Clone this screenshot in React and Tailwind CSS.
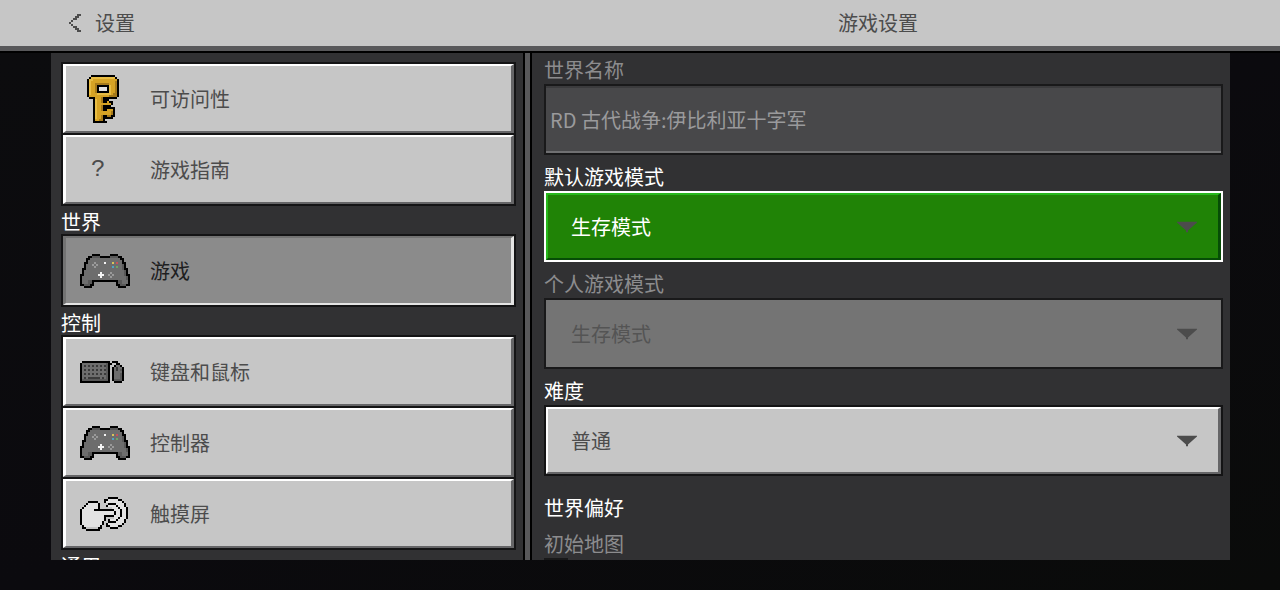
import { clsx } from 'clsx';

const PALETTE = {
  K: '#000000',
  W: '#f4f4f4',
  w: '#e2e2e2',
  s: '#c4c4c4',
  g: '#6d6d6d',
  d: '#585858',
  a: '#9a9a9a',
  k: '#3a3a3a',
  l: '#e8bd45',
  y: '#d6a325',
  o: '#a67a1b',
  r: '#c8505c',
  b: '#4fa3c4',
  e: '#6fa565',
  u: '#d8c35a',
};

const KEY = [
  '..KKKKKKKKKKKK..',
  '.KllllllllllllK.',
  'KllyyyyyyyyyyyyK',
  'KlyyyyyyyyyyyyoK',
  'KlyyoooooooyyyoK',
  'KlyyoKKKKKKlyyoK',
  'KlyyoKwwwwKlyyoK',
  'KlyyoKwwwwKlyyoK',
  'KlyyoKKKKKKlyyoK',
  'KlyyylllllllyooK',
  'KyyyyyyyyyyooooK',
  '.KKKyyyoKKKKKKK.',
  '...KlyyoKKK.....',
  '...KlyyoKKyKK...',
  '...KlyyyyyyyK...',
  '...KlyyoKKKK....',
  '...KlyyoKKKKKK..',
  '...KlyyoKKyyyK..',
  '...KlyyyyyyyoK..',
  '...KlyyyyyyyoK..',
  '...KlyyoKKooKK..',
  '...KlyyoKKKKK...',
  '...KyyooK.......',
  '...KKKKKKK......',
];

const GAMEPAD = [
  '......KKKK.....KKKK......',
  '....KKddddKKKKKddddKK....',
  '...KKgggggggggggggggKK...',
  '...KgggggggggggggggggK...',
  '..KKgggaggggWgggugrggKK..',
  '..KgggagaggggggggggggdK..',
  '..KggggaggggggggbgeggdK..',
  '.KKggggggggggggggggggdKK.',
  '.KggggggggggggggggggggdK.',
  '.KggggggggWggggaggggggdK.',
  'KKgggggggWWWggagagggggdKK',
  'KgggggggggWggggagggggggdK',
  'KggggggggggggggggggggggdK',
  'KgggddKKKKKKKKKKKKKddgggK',
  'KgggddK...........KddgggK',
  'KKdddKK...........KKdddKK',
  '..KKKK.............KKKK..',
];

const KEYBOARD = [
  '.KKKKKKKKKKKKKK.KKK....',
  'KggggggggggggdKK..KK...',
  'KgkgkgkgkgkgkdK..KggK..',
  'KggggggggggggdK.KgkggK.',
  'KgkgkgkgkgkgkdK.KgkgdK.',
  'KggggggggggggdK.KggggK.',
  'KgkgkgkgkgkgkdK.KgggdK.',
  'KggggggggggggdK.KgggdK.',
  'KgkgkkkkkkgkgdK.KgggdK.',
  'KdddddddddddddK.KddddK.',
  'KKKKKKKKKKKKKKK..KKKK..',
];

const TOUCH = [
  '..............KKKKK.....',
  '............KKwwwwwKK...',
  '....KKKKK...KwwwwwwwwK..',
  '...KwwwwwK....KKKKwwwwK.',
  '..KwwwwwwK...KwwwwKwwwK.',
  '.KwwwwwwwK......wwwKwwwK',
  'KwwwwwwKKKKKKKKKKwwwKwwK',
  'KwwwwwwwwwwwwwwwwKwwKwwK',
  'KwwwwwwwwwwwwwwwwKwwKwwK',
  'KwwwwwwwwwwwKKKKKwwwKwwK',
  'KwwwwwwwwwwwK....wwKwwwK',
  'KwwwwwwwwwwwK.KwwwKwwwK.',
  'KwwwwwwwwwwK..KKKKwwwwK.',
  'KwwwwwwwwwwK.KwwwwwwwK..',
  '.KwwwwwwwwK..KKwwwwKK...',
  '.KKssssssKK....KKKK.....',
  '...KKKKKKK..............',
];

const CHEVRON_LEFT = [
  '....KK',
  '...KK.',
  '..KK..',
  '.K....',
  'K.....',
  '.K....',
  '..KK..',
  '...KK.',
  '....KK',
];

function PixelIcon({ rows, size = 2, colors = PALETTE }) {
  const cols = rows[0].length;
  return (
    <svg
      width={cols * size}
      height={rows.length * size}
      viewBox={`0 0 ${cols} ${rows.length}`}
      shapeRendering="crispEdges"
      aria-hidden="true"
    >
      {rows.flatMap((row, y) =>
        [...row].map((c, x) =>
          c === '.' ? null : <rect key={`${x}-${y}`} x={x} y={y} width="1" height="1" fill={colors[c]} />
        )
      )}
    </svg>
  );
}

const SECTIONS = [
  {
    title: null,
    items: [
      { label: '可访问性', icon: <PixelIcon rows={KEY} />, narrow: true },
      { label: '游戏指南', icon: <span className="px-1 font-['Liberation_Mono'] text-2xl">?</span>, narrow: true },
    ],
  },
  {
    title: '世界',
    items: [{ label: '游戏', icon: <PixelIcon rows={GAMEPAD} />, active: true }],
  },
  {
    title: '控制',
    items: [
      { label: '键盘和鼠标', icon: <PixelIcon rows={KEYBOARD} /> },
      { label: '控制器', icon: <PixelIcon rows={GAMEPAD} /> },
      { label: '触摸屏', icon: <PixelIcon rows={TOUCH} /> },
    ],
  },
  { title: '通用', items: [] },
];

function NavButton({ label, icon, narrow, active }) {
  return (
    <button
      type="button"
      aria-current={active ? 'page' : undefined}
      className={clsx(
        'flex h-[69px] w-full items-center border-2 border-l-3 border-r-3 text-left',
        active
          ? 'border-t-[#737373] border-l-[#737373] border-r-[#e4e4e4] border-b-[#e4e4e4] bg-[#8b8b8b] text-[#1e1e1f]'
          : 'border-t-white border-l-white border-r-[#656567] border-b-[#656567] bg-[#c6c6c6] text-[#4c4c4c]'
      )}
    >
      <span className={clsx('ml-3.5 flex w-[50px]', narrow && 'pl-[7px]')}>{icon}</span>
      <span className="ml-5">{label}</span>
    </button>
  );
}

function Sidebar() {
  return (
    <nav className="overflow-hidden border-r-2 border-black bg-[#313133] pt-[9px] pr-[7px] pl-2.5">
      {SECTIONS.map((section, i) => (
        <section key={i}>
          {section.title && <h2 className="pt-1 leading-6 text-white">{section.title}</h2>}
          {section.items.length > 0 && (
            <ul className="flex flex-col gap-0.5 bg-[#141415] p-0.5">
              {section.items.map((item) => (
                <li key={item.label}>
                  <NavButton {...item} />
                </li>
              ))}
            </ul>
          )}
        </section>
      ))}
    </nav>
  );
}

function FieldLabel({ htmlFor, muted, children }) {
  return (
    <label htmlFor={htmlFor} className={clsx('block pt-2 leading-7', muted ? 'text-[#8c8c8e]' : 'text-white')}>
      {children}
    </label>
  );
}

const SELECT_STYLES = {
  focused: {
    frame: 'border-white',
    face: 'border-t-[#27b81c] border-l-[#27b81c] border-r-[#064d06] border-b-[#064d06] bg-[#208306] text-white',
  },
  disabled: {
    frame: 'border-[#19191a]',
    face: 'border-[#747474] bg-[#747474] text-[#545454]',
  },
  normal: {
    frame: 'border-[#141415]',
    face: 'border-t-white border-l-white border-r-[#656567] border-b-[#656567] bg-[#c6c6c6] text-[#4c4c4c]',
  },
};

function SelectField({ id, label, value, options, variant = 'normal' }) {
  const style = SELECT_STYLES[variant];
  const disabled = variant === 'disabled';
  return (
    <div>
      <FieldLabel htmlFor={id} muted={disabled}>
        {label}
      </FieldLabel>
      <div className={clsx('relative border-2', style.frame)}>
        <select
          id={id}
          defaultValue={value}
          disabled={disabled}
          className={clsx(
            'block h-[67px] w-full appearance-none rounded-none border-2 border-r-3 pl-[23px] outline-none disabled:opacity-100',
            style.face
          )}
        >
          {options.map((option) => (
            <option key={option}>{option}</option>
          ))}
        </select>
        <svg
          className="pointer-events-none absolute top-1/2 right-6 -translate-y-1/2 text-[#4c4c4c]"
          width="20"
          height="11"
          viewBox="0 0 20 11"
          aria-hidden="true"
        >
          <path d="M0 0h20v1L11 9v2H9V9L0 1z" fill="currentColor" />
        </svg>
      </div>
    </div>
  );
}

const MODES = ['生存模式', '创造模式', '冒险模式'];

function GameSettings() {
  return (
    <main className="overflow-hidden border-l-2 border-black bg-[#313133] pr-[7px] pl-3">
      <div>
        <label htmlFor="world-name" className="block pt-[3px] leading-7 text-[#8c8c8e]">
          世界名称
        </label>
        <div className="border-2 border-[#19191a]">
          <input
            id="world-name"
            type="text"
            disabled
            defaultValue="RD 古代战争:伊比利亚十字军"
            className="block h-[67px] w-full border-t-2 border-b-2 border-t-[#3b3b3d] border-b-[#707072] bg-[#48484a] px-1 text-[#9a9a9c]"
          />
        </div>
      </div>
      <SelectField id="default-mode" label="默认游戏模式" value="生存模式" options={MODES} variant="focused" />
      <SelectField id="personal-mode" label="个人游戏模式" value="生存模式" options={MODES} variant="disabled" />
      <SelectField id="difficulty" label="难度" value="普通" options={['和平', '简单', '普通', '困难']} />
      <h2 className="pt-[18px] leading-7 text-white">世界偏好</h2>
      <FieldLabel htmlFor="starting-map" muted>
        初始地图
      </FieldLabel>
      <input
        id="starting-map"
        type="checkbox"
        disabled
        className="block h-6 w-6 appearance-none border-2 border-[#19191a] bg-[#48484a]"
      />
    </main>
  );
}

export default function App() {
  return (
    <div className="flex h-screen flex-col overflow-hidden bg-[#0b0b0d] font-['Noto_Sans_CJK_SC',sans-serif] text-xl font-normal">
      <header className="grid shrink-0 grid-cols-[479fr_700fr] border-b-5 border-[#58585a] bg-[#c6c6c6] pr-[50px] pl-[51px] text-[#4c4c4c]">
        <div className="flex h-[46px] items-center">
          <button type="button" aria-label="返回" className="ml-[18px]">
            <PixelIcon rows={CHEVRON_LEFT} colors={{ K: '#4c4c4c' }} />
          </button>
          <h1 className="ml-3.5">设置</h1>
        </div>
        <h2 className="flex h-[46px] items-center justify-center pr-1">游戏设置</h2>
      </header>
      <div className="grid min-h-0 flex-1 grid-cols-[474fr_5px_700fr] grid-rows-[minmax(0,1fr)] border-t-2 border-black bg-linear-to-br from-[#0c0c0e] via-[#0b0a0e] to-[#0a0b0a] pr-[50px] pb-[30px] pl-[51px]">
        <Sidebar />
        <div className="bg-[#58585a]" />
        <GameSettings />
      </div>
    </div>
  );
}
